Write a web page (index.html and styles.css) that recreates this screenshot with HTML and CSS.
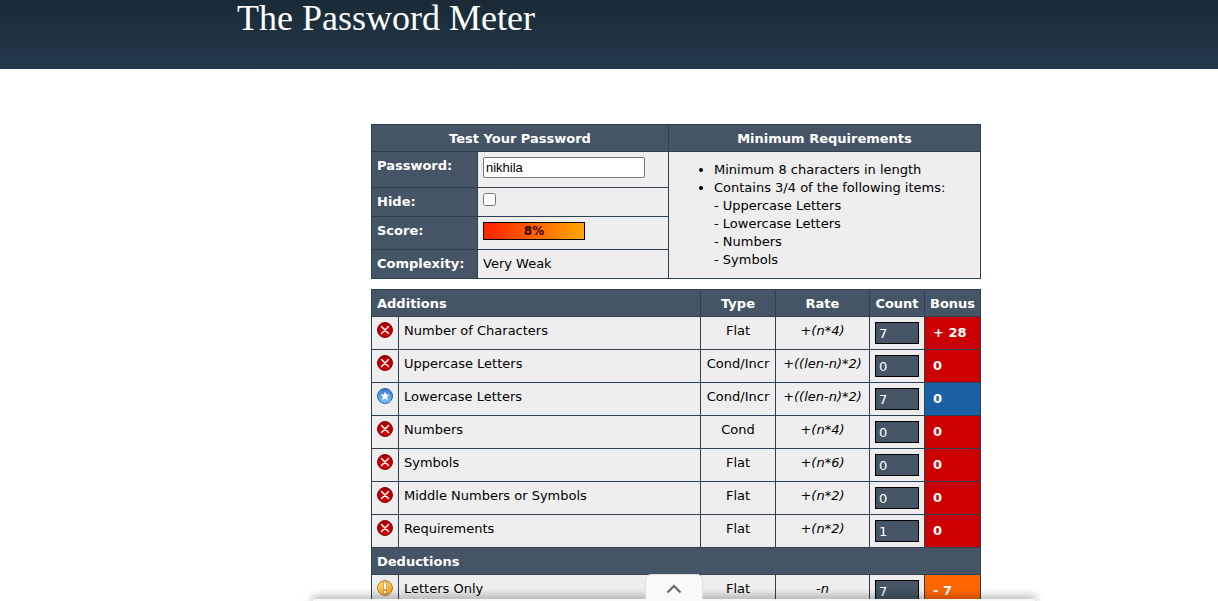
FILE: index.html
```html
<!DOCTYPE html>
<html lang="en">
<head>
<meta charset="utf-8">
<title>The Password Meter</title>
<link rel="stylesheet" href="styles.css">
</head>
<body>
<svg class="defs" aria-hidden="true">
  <defs>
    <radialGradient id="red" cx="50%" cy="65%" r="60%"><stop offset="0" stop-color="#e00000"/><stop offset="1" stop-color="#a80008"/></radialGradient>
    <linearGradient id="blue" x1="0" y1="0" x2="0" y2="1"><stop offset="0" stop-color="#3a78cc"/><stop offset="1" stop-color="#7fc4ff"/></linearGradient>
    <linearGradient id="amber" x1="0" y1="0" x2="1" y2="1"><stop offset="0" stop-color="#ffe070"/><stop offset="1" stop-color="#f09a10"/></linearGradient>
    <symbol id="fail" viewBox="0 0 16 16"><circle cx="8" cy="8" r="7.500" fill="url(#red)" stroke="#8c0408"/><path d="M4.500 4.500l7 7M11.500 4.500l-7 7" stroke="#fff" stroke-width="1.500" stroke-linecap="round"/></symbol>
    <symbol id="exceed" viewBox="0 0 16 16"><circle cx="8" cy="8" r="7.500" fill="url(#blue)" stroke="#2b62b0"/><path d="M8 3.500l1.200 3 3.300.2-2.500 2.100.9 3.400L8 10.400l-2.900 1.800.9-3.400-2.500-2.100 3.300-.2z" fill="#fff"/></symbol>
    <symbol id="warn" viewBox="0 0 16 16"><circle cx="8" cy="8" r="7.500" fill="url(#amber)" stroke="#b87828"/><path d="M6.500 2.500h3v7h-3zM6.500 10.500h3v3h-3z" fill="#fff" stroke="#b08040" stroke-width=".6"/></symbol>
  </defs>
</svg>
<header class="banner">
  <div class="page"><h1>The Password Meter</h1></div>
</header>
<main class="page content">
  <table class="grid tester">
    <colgroup><col class="col-label"><col class="col-value"><col></colgroup>
    <thead><tr><th colspan="2">Test Your Password</th><th>Minimum Requirements</th></tr></thead>
    <tbody>
      <tr class="row-password">
        <th><label for="password">Password:</label></th>
        <td><input class="password" id="password" type="text" value="nikhila"></td>
        <td class="requirements" rowspan="4">
          <ul>
            <li>Minimum 8 characters in length</li>
            <li>Contains 3/4 of the following items:<br>- Uppercase Letters<br>- Lowercase Letters<br>- Numbers<br>- Symbols</li>
          </ul>
        </td>
      </tr>
      <tr class="row-hide"><th><label for="hide">Hide:</label></th><td><input class="hide" id="hide" type="checkbox"></td></tr>
      <tr class="row-score"><th>Score:</th><td><div class="score">8%</div></td></tr>
      <tr class="row-complexity"><th>Complexity:</th><td>Very Weak</td></tr>
    </tbody>
  </table>
  <table class="grid results">
    <colgroup><col class="col-icon"><col><col class="col-type"><col class="col-rate"><col class="col-count"><col class="col-bonus"></colgroup>
    <thead><tr><th class="left" colspan="2">Additions</th><th>Type</th><th>Rate</th><th>Count</th><th>Bonus</th></tr></thead>
    <tbody>
      <tr><td class="icon"><svg><use href="#fail"/></svg></td><td>Number of Characters</td><td class="type">Flat</td><td class="rate">+(n*4)</td><td class="count"><input type="text" readonly aria-label="Number of Characters count" value="7"></td><td class="bonus fail">+ 28</td></tr>
      <tr><td class="icon"><svg><use href="#fail"/></svg></td><td>Uppercase Letters</td><td class="type">Cond/Incr</td><td class="rate">+((len-n)*2)</td><td class="count"><input type="text" readonly aria-label="Uppercase Letters count" value="0"></td><td class="bonus fail">0</td></tr>
      <tr><td class="icon"><svg><use href="#exceed"/></svg></td><td>Lowercase Letters</td><td class="type">Cond/Incr</td><td class="rate">+((len-n)*2)</td><td class="count"><input type="text" readonly aria-label="Lowercase Letters count" value="7"></td><td class="bonus exceed">0</td></tr>
      <tr><td class="icon"><svg><use href="#fail"/></svg></td><td>Numbers</td><td class="type">Cond</td><td class="rate">+(n*4)</td><td class="count"><input type="text" readonly aria-label="Numbers count" value="0"></td><td class="bonus fail">0</td></tr>
      <tr><td class="icon"><svg><use href="#fail"/></svg></td><td>Symbols</td><td class="type">Flat</td><td class="rate">+(n*6)</td><td class="count"><input type="text" readonly aria-label="Symbols count" value="0"></td><td class="bonus fail">0</td></tr>
      <tr><td class="icon"><svg><use href="#fail"/></svg></td><td>Middle Numbers or Symbols</td><td class="type">Flat</td><td class="rate">+(n*2)</td><td class="count"><input type="text" readonly aria-label="Middle Numbers or Symbols count" value="0"></td><td class="bonus fail">0</td></tr>
      <tr><td class="icon"><svg><use href="#fail"/></svg></td><td>Requirements</td><td class="type">Flat</td><td class="rate">+(n*2)</td><td class="count"><input type="text" readonly aria-label="Requirements count" value="1"></td><td class="bonus fail">0</td></tr>
    </tbody>
    <tbody>
      <tr class="section"><th class="left" colspan="6">Deductions</th></tr>
      <tr><td class="icon"><svg><use href="#warn"/></svg></td><td>Letters Only</td><td class="type">Flat</td><td class="rate">-n</td><td class="count"><input type="text" readonly aria-label="Letters Only count" value="7"></td><td class="bonus warn">- 7</td></tr>
    </tbody>
  </table>
</main>
<div class="drawer">
  <button class="drawer-tab" type="button" aria-label="Expand"><svg viewBox="0 0 16 10"><path d="M1.500 8.500L8 2l6.500 6.500" fill="none" stroke="#5f6368" stroke-width="2"/></svg></button>
  <div class="drawer-edge"></div>
</div>
</body>
</html>
```
FILE: styles.css
```css
* { box-sizing: border-box; }

body {
  height: 100vh;
  margin: 0;
  overflow: hidden;
  background: #fff;
  color: #000;
  font: 13px/18px Verdana, "DejaVu Sans", sans-serif;
}

.defs { position: absolute; width: 0; height: 0; }

.page { max-width: 744px; margin: 0 auto; }

.banner {
  height: 69px;
  background: linear-gradient(#1a2a36, #24394b);
}

h1 {
  margin: 0;
  color: #fff;
  font: 36px/36px Georgia, "Liberation Serif", serif;
}

.content {
  display: flex;
  flex-direction: column;
  align-items: flex-end;
  gap: 10px;
  padding-top: 55px;
}

.grid {
  width: 100%;
  max-width: 610px;
  border-collapse: collapse;
  table-layout: fixed;
}

.grid th,
.grid td {
  padding: 5px 5px 3px;
  border: 1px solid #2f4150;
  text-align: left;
  vertical-align: top;
}

.grid th { background: #455565; color: #fff; }
.grid td { background: #eee; }
.grid thead th { text-align: center; }
.grid thead th.left { text-align: left; }

.col-label { width: 106px; }
.col-value { width: 191px; }
.row-password { height: 36px; }
.row-hide { height: 29px; }
.row-score { height: 33px; }
.row-complexity { height: 29px; }

.password {
  display: block;
  width: 162px;
  height: 21px;
  margin: 0;
  padding: 1px 2px;
  border: 1px solid #767676;
  border-radius: 2px;
  background: #fff;
  color: #000;
  font: 13px "Liberation Sans", Arial, sans-serif;
}

.hide { display: block; width: 13px; height: 13px; margin: 0; }

.score {
  width: 102px;
  height: 18px;
  border: 1px solid #000;
  background: linear-gradient(100deg, #f20, #ff5500 40%, #fa0);
  color: #300;
  font-size: 12px;
  font-weight: bold;
  line-height: 16px;
  text-align: center;
}

.requirements ul { margin: 4px 0; padding-left: 40px; }

.col-icon { width: 27px; }
.col-type { width: 75px; }
.col-rate { width: 94px; }
.col-count { width: 55px; }
.col-bonus { width: 56px; }

.results tbody tr { height: 33px; }
.results tbody .section { height: 27px; }
.results .type,
.results .rate { padding: 5px 0 3px; text-align: center; }
.results .rate { font-style: italic; }
.results .icon svg { display: block; width: 16px; height: 16px; }
.results .bonus { padding: 7px 8px 5px; color: #fff; font-weight: bold; }
.results .fail { background: #c00; }
.results .exceed { background: #1a60a4; }
.results .warn { background: #f60; }

.count input {
  display: block;
  width: 44px;
  height: 22px;
  margin: 0;
  padding: 1px 3px;
  border: 1px solid #000;
  background: #455565;
  color: #fff;
  font: inherit;
}

.drawer {
  position: fixed;
  right: 183px;
  bottom: 0;
  left: 313px;
  display: flex;
  flex-direction: column;
  align-items: center;
}

.drawer-edge {
  width: 100%;
  height: 2px;
  border-radius: 8px 8px 0 0;
  background: #f8f8f8;
  box-shadow: 0 0 10px 1px rgba(0, 0, 0, 0.6);
}

.drawer-tab {
  z-index: 1;
  display: flex;
  align-items: center;
  justify-content: center;
  width: 58px;
  height: 25px;
  padding: 4px 0 0;
  border: 1px solid #ddd;
  border-bottom: 0;
  border-radius: 6px 6px 0 0;
  background: #f9f9f9;
}

.drawer-tab svg { width: 16px; height: 10px; }
```
